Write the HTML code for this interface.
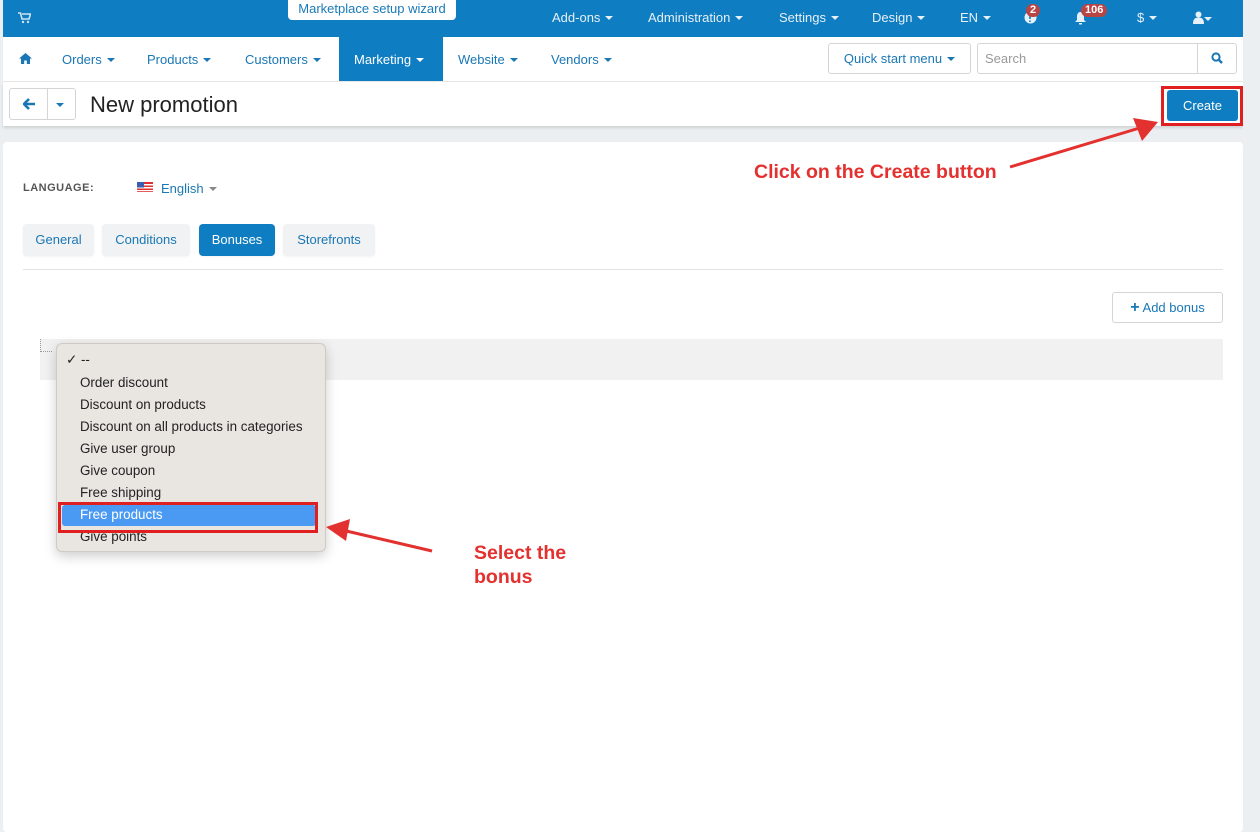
<!DOCTYPE html>
<html><head><meta charset="utf-8"><style>
*{box-sizing:border-box;margin:0;padding:0}
body{width:1260px;height:828px;overflow:hidden;background:#eceff1;font-family:"Liberation Sans",sans-serif;position:relative;font-size:13px}
.abs{position:absolute}
.top{left:3px;top:0;width:1240px;height:37px;background:#0f7dc1;color:#e6f0f8}
.top span{position:absolute;top:10px;font-size:13px}
.car{display:inline-block;width:0;height:0;border-left:4px solid transparent;border-right:4px solid transparent;border-top:4px solid currentColor;vertical-align:middle;margin-left:5px;margin-top:-2px}
.wiz{left:288px;top:0;width:168px;height:20px;background:#fff;border-radius:0 0 4px 4px;color:#1a7ab8;font-size:13px;text-align:center;line-height:18px}
.badge{position:absolute;background:#b84444;color:#fff;font-size:11px;border-radius:8px;padding:0 4px;line-height:13px;font-weight:bold}
.nav{left:3px;top:37px;width:1240px;height:45px;background:#fff;border-bottom:1px solid #e8e8e8}
.nav span{position:absolute;top:15px;color:#1a77b5;font-size:13px}
.mk{position:absolute;left:336px;top:0;width:104px;height:44px;background:#0f7dc1}
.tb{left:3px;top:82px;width:1240px;height:44px;background:#fff;box-shadow:0 2px 3px rgba(0,0,0,.12)}
.panel{left:3px;top:142px;width:1240px;height:690px;background:#fff;border-radius:4px}
.tab{position:absolute;top:224px;height:32px;line-height:32px;background:#f1f2f3;color:#1a77b5;border-radius:4px;text-align:center;font-size:13px;box-shadow:0 1px 2px rgba(0,0,0,.05)}
.red{color:#e3312f;font-weight:bold;font-size:19.5px}
.dd{left:56px;top:343px;width:270px;height:209px;background:#e9e5e1;border:1px solid #cfcac5;border-radius:6px;box-shadow:0 4px 12px rgba(0,0,0,.2)}
.dd div{position:absolute;left:23px;font-size:13.4px;color:#222}
</style></head><body>
<div class="abs top">
 <svg class="abs" style="left:15px;top:12px" width="13" height="12" viewBox="0 0 13 12"><path d="M0 1h2.5l1.5 6h7l1.5-5H4" fill="none" stroke="#cfe3f2" stroke-width="1.6"/><circle cx="5" cy="10" r="1.2" fill="#cfe3f2"/><circle cx="10" cy="10" r="1.2" fill="#cfe3f2"/></svg>
 <span style="left:549px">Add-ons<i class="car"></i></span>
 <span style="left:645px">Administration<i class="car"></i></span>
 <span style="left:776px">Settings<i class="car"></i></span>
 <span style="left:869px">Design<i class="car"></i></span>
 <span style="left:957px">EN<i class="car"></i></span>
 <svg class="abs" style="left:1021px;top:11px" width="13" height="13"><circle cx="6.5" cy="6.5" r="6" fill="#e6f0f8"/><path d="M6 3v5M6 9.5v1.5" stroke="#0f7dc1" stroke-width="1.6"/></svg>
 <div class="badge" style="left:1023px;top:4px">2</div>
 <svg class="abs" style="left:1071px;top:11px" width="13" height="14"><path d="M6.5 1C3.5 1 3 4 3 6v3L1 11h11l-2-2V6c0-2-.5-5-3.5-5zM5 12h3v1.5H5z" fill="#e6f0f8"/></svg>
 <div class="badge" style="left:1078px;top:4px">106</div>
 <span style="left:1134px">$<i class="car"></i></span>
 <svg class="abs" style="left:1190px;top:11px" width="11" height="13"><circle cx="5.5" cy="3.5" r="3" fill="#e6f0f8"/><path d="M0 13c0-5 2-6.5 5.5-6.5S11 8 11 13z" fill="#e6f0f8"/></svg>
 <i class="car abs" style="left:1201px;top:17px;margin:0"></i>
</div>
<div class="abs wiz">Marketplace setup wizard</div>
<div class="abs nav">
 <div class="mk"></div>
 <svg class="abs" style="left:16px;top:16px" width="13" height="11" viewBox="0 0 13 11"><path d="M6.5 0L0 5.5h2V11h3.2V7.5h2.6V11H11V5.5h2z" fill="#1a77b5"/></svg>
 <span style="left:59px">Orders<i class="car"></i></span>
 <span style="left:144px">Products<i class="car"></i></span>
 <span style="left:242px">Customers<i class="car"></i></span>
 <span style="left:351px;color:#fff">Marketing<i class="car"></i></span>
 <span style="left:455px">Website<i class="car"></i></span>
 <span style="left:548px">Vendors<i class="car"></i></span>
 <div class="abs" style="left:825px;top:6px;width:143px;height:31px;border:1px solid #d5d5d5;border-radius:3px;color:#1a77b5;line-height:29px;text-align:center">Quick start menu<i class="car"></i></div>
 <div class="abs" style="left:974px;top:6px;width:260px;height:31px;border:1px solid #d5d5d5;border-radius:3px;color:#999;line-height:29px;padding-left:7px">Search</div>
 <div class="abs" style="left:1194px;top:6px;width:1px;height:31px;background:#d5d5d5"></div>
 <svg class="abs" style="left:1208px;top:15px" width="12" height="12" viewBox="0 0 12 12"><circle cx="5" cy="5" r="3.6" fill="none" stroke="#1a77b5" stroke-width="2"/><path d="M7.5 7.5L11 11" stroke="#1a77b5" stroke-width="2.4"/></svg>
</div>
<div class="abs tb">
 <div class="abs" style="left:6px;top:6px;width:67px;height:32px;border:1px solid #d5d5d5;border-radius:3px"></div>
 <div class="abs" style="left:44px;top:6px;width:1px;height:32px;background:#d5d5d5"></div>
 <svg class="abs" style="left:20px;top:16px" width="13" height="12" viewBox="0 0 13 12"><path d="M6 1L1 6l5 5M1 6h11" fill="none" stroke="#1a77b5" stroke-width="2.6"/></svg>
 <i class="car abs" style="left:53px;top:21px;color:#1a77b5;margin:0"></i>
 <div class="abs" style="left:87px;top:10px;font-size:22px;color:#222">New promotion</div>
 <div class="abs" style="left:1158px;top:4px;width:82px;height:40px;border:3px solid #e02020"></div>
 <div class="abs" style="left:1164px;top:8px;width:71px;height:31px;background:#0f7dc1;border-radius:3px;color:#fff;text-align:center;line-height:31px">Create</div>
</div>
<div class="abs panel"></div>
<div class="abs" style="left:23px;top:182px;font-size:11px;color:#555;font-weight:bold;letter-spacing:.5px">LANGUAGE:</div>
<svg class="abs" style="left:137px;top:182px" width="16" height="10"><rect width="16" height="10" fill="#d33"/><rect y="2" width="16" height="1.5" fill="#fff"/><rect y="5" width="16" height="1.5" fill="#fff"/><rect y="8" width="16" height="1.2" fill="#fff"/><rect width="7" height="5.5" fill="#3a5fb0"/></svg>
<div class="abs" style="left:161px;top:181px;color:#1a77b5">English<i class="car" style="color:#888"></i></div>
<div class="tab" style="left:23px;width:71px">General</div>
<div class="tab" style="left:102px;width:88px">Conditions</div>
<div class="tab" style="left:199px;width:76px;background:#0f7dc1;color:#fff">Bonuses</div>
<div class="tab" style="left:283px;width:92px">Storefronts</div>
<div class="abs" style="left:23px;top:269px;width:1200px;height:1px;background:#e2e2e2"></div>
<div class="abs" style="left:1112px;top:292px;width:111px;height:31px;border:1px solid #d5d5d5;border-radius:3px;color:#1a77b5;line-height:29px;text-align:center"><b style="font-size:16px">+</b> Add bonus</div>
<div class="abs" style="left:40px;top:339px;width:1183px;height:41px;background:#f1f1f1"></div>
<div class="abs" style="left:40px;top:339px;width:12px;height:13px;border-left:1px dotted #999;border-bottom:1px dotted #999"></div>
<div class="abs red" style="left:754px;top:161px">Click on the Create button</div>
<svg class="abs" style="left:1005px;top:115px" width="160" height="60"><path d="M5 52L138 12" stroke="#e3312f" stroke-width="3"/><path d="M153 7L128 3L137 26z" fill="#e3312f"/></svg>
<div class="abs dd">
 <div style="left:9px;top:8px">✓ --</div>
 <div style="top:31px">Order discount</div>
 <div style="top:53px">Discount on products</div>
 <div style="top:75px">Discount on all products in categories</div>
 <div style="top:97px">Give user group</div>
 <div style="top:119px">Give coupon</div>
 <div style="top:141px">Free shipping</div>
 <div style="left:5px;top:161px;width:254px;height:21px;background:#4a9af4;border-radius:3px"></div>
 <div style="top:163px;color:#fff">Free products</div>
 <div style="top:185px">Give points</div>
</div>
<div class="abs" style="left:58px;top:502px;width:260px;height:31px;border:3px solid #e02020"></div>
<svg class="abs" style="left:320px;top:515px" width="120" height="40"><path d="M112 36L22 15" stroke="#e3312f" stroke-width="3"/><path d="M6 12L30 4L26 26z" fill="#e3312f"/></svg>
<div class="abs red" style="left:474px;top:541px;line-height:24px">Select the<br>bonus</div>
<div class="abs" style="left:1243px;top:0;width:17px;height:828px;background:#eceff1"></div>
</body></html>
